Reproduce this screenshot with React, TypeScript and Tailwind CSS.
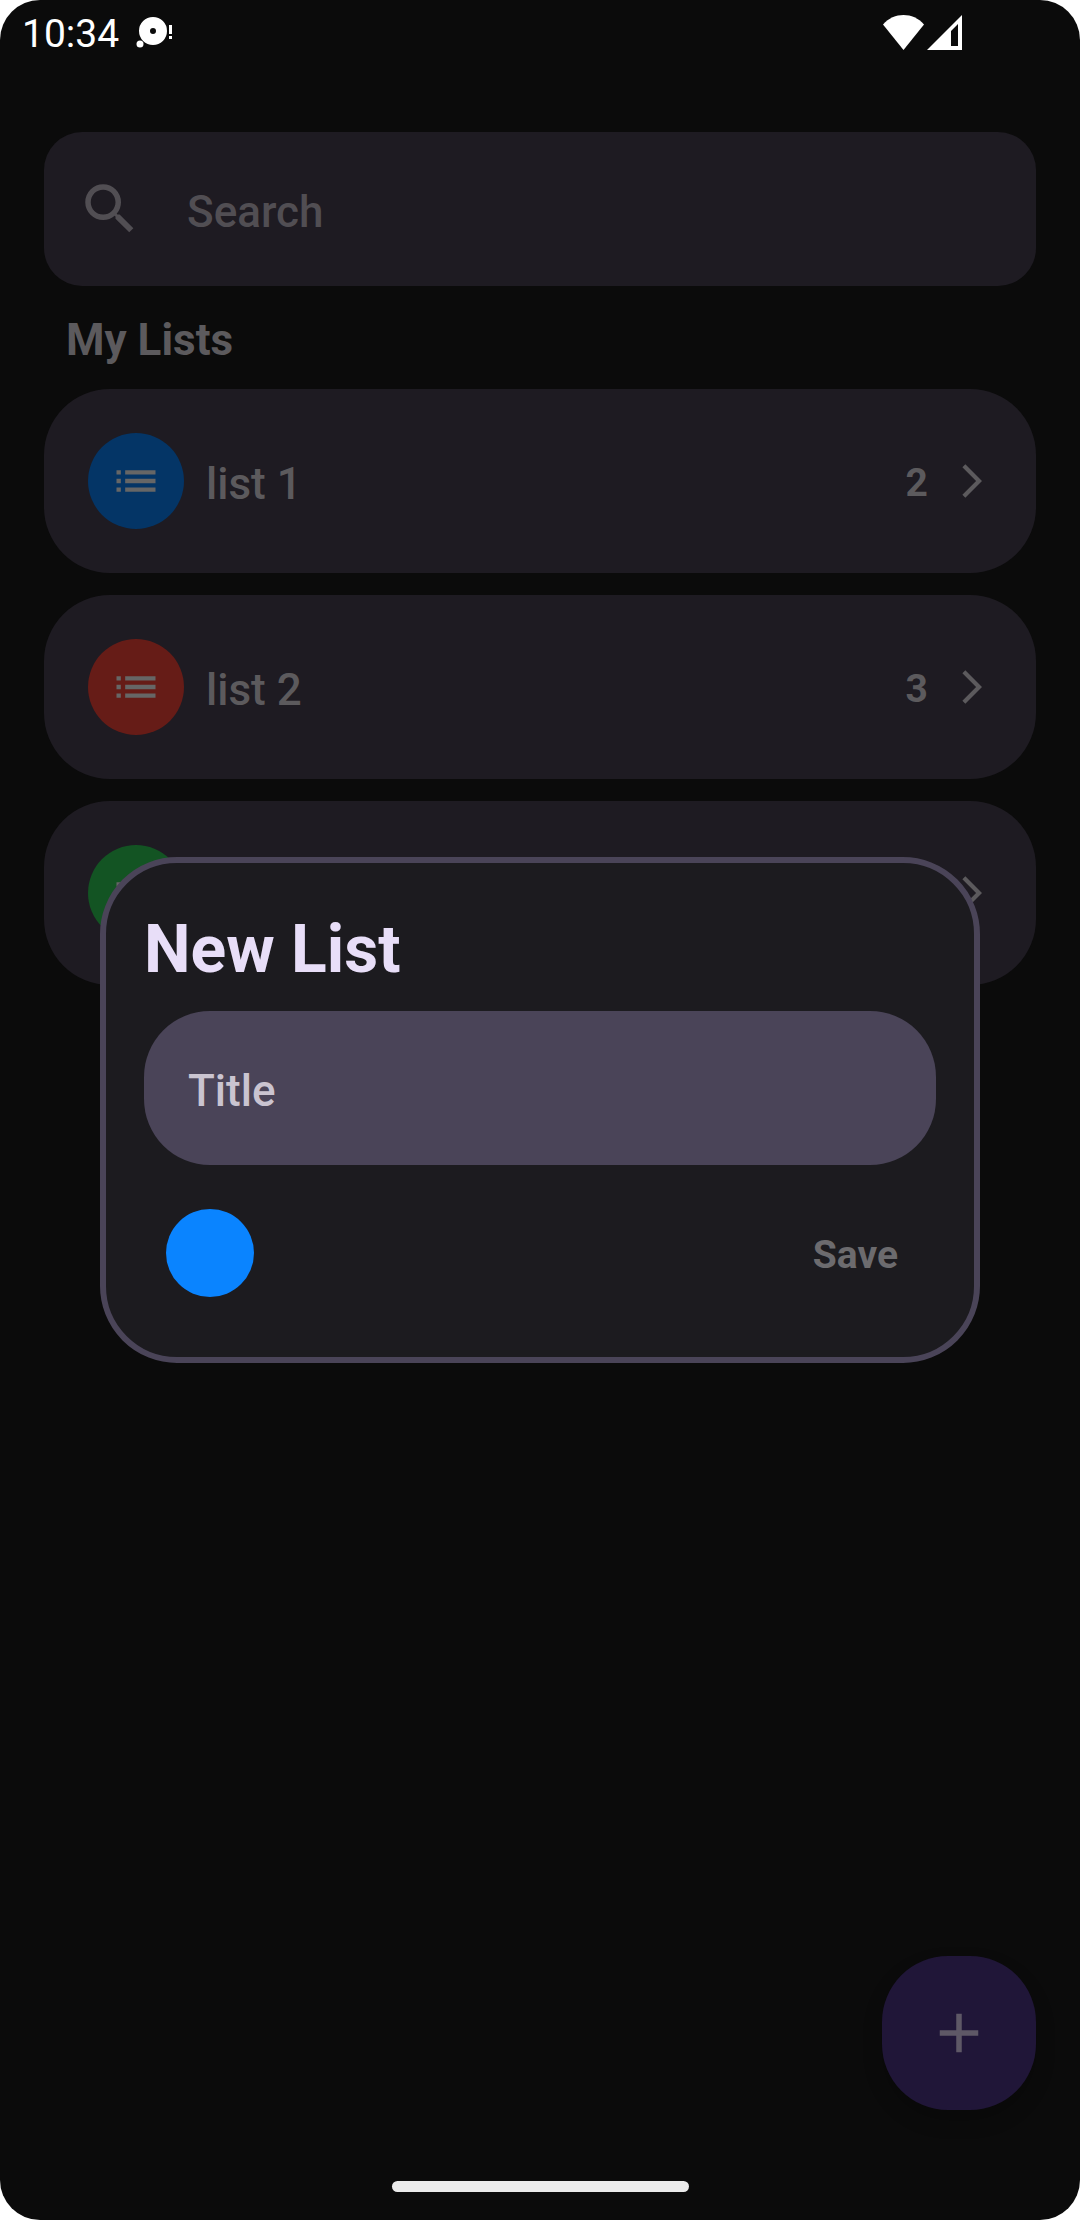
import React, { useState } from "react";

type TodoList = { name: string; count: number | null; color: string };

const lists: TodoList[] = [
  { name: "list 1", count: 2, color: "bg-[#043566]" },
  { name: "list 2", count: 3, color: "bg-[#661c17]" },
  { name: "", count: null, color: "bg-[#135423]" },
];

function StatusBar() {
  return (
    <header className="flex h-16 items-center justify-between pl-[22px] pr-[118px] text-white">
      <div className="flex items-center gap-4">
        <time className="pt-1 text-[39px] leading-[48px]">10:34</time>
        <svg className="h-8 w-10" viewBox="0 0 40 32" fill="currentColor" aria-hidden="true">
          <path
            fillRule="evenodd"
            d="M18 1a14 14 0 1 0 0 28 14 14 0 0 0 0-28zm0 11a3 3 0 1 1 0 6 3 3 0 0 1 0-6z"
          />
          <circle cx="5" cy="28" r="3.5" />
          <path d="M34 9h3v9h-3zM34 20h3v3h-3z" />
        </svg>
      </div>
      <div className="flex items-center gap-[3px]">
        <svg className="h-[35px] w-[41px]" viewBox="0 0 41 35" fill="currentColor" aria-hidden="true">
          <path d="M0 9.500C5.500 3 13 0 20.500 0S35.500 3 41 9.500L20.500 35z" />
        </svg>
        <svg className="h-[35px] w-[35px]" viewBox="0 0 35 35" fill="currentColor" aria-hidden="true">
          <path fillRule="evenodd" d="M35 0v35H0zM31 9l-7 7v15h7z" />
        </svg>
      </div>
    </header>
  );
}

function SearchField() {
  return (
    <label className="flex h-[154px] items-center gap-11 rounded-[38px] bg-[#1e1b22] px-[33px]">
      <svg className="size-[66px] shrink-0 text-[#514e53]" viewBox="0 0 24 24" fill="currentColor" aria-hidden="true">
        <path d="M15.5 14h-.79l-.28-.27A6.471 6.471 0 0 0 16 9.500 6.500 6.500 0 1 0 9.500 16c1.610 0 3.090-.59 4.230-1.570l.27.28v.79l5 4.990L20.490 19l-4.990-5zm-6 0C7.010 14 5 11.990 5 9.500S7.010 5 9.500 5 14 7.010 14 9.500 11.990 14 9.500 14z" />
      </svg>
      <input
        type="search"
        aria-label="Search"
        placeholder="Search"
        className="min-w-0 flex-1 bg-transparent pt-1.5 text-[44px] font-medium leading-[66px] text-[#5c5a5c] outline-none placeholder:text-[#514e53]"
      />
    </label>
  );
}

function ListCard({ list }: { list: TodoList }) {
  return (
    <li>
      <button
        type="button"
        aria-label={list.name || "Untitled list"}
        className="flex w-full items-center rounded-[66px] bg-[#1e1b22] p-11 text-left text-[#5c5a5d]"
      >
        <span className={`flex size-24 shrink-0 items-center justify-center rounded-full text-[#666666] ${list.color}`}>
          <svg className="size-[52px]" viewBox="0 0 24 24" fill="currentColor" aria-hidden="true">
            <path d="M3 13h2v-2H3v2zm0 4h2v-2H3v2zm0-8h2V7H3v2zm4 4h14v-2H7v2zm0 4h14v-2H7v2zM7 7v2h14V7H7z" />
          </svg>
        </span>
        <span className="flex-1 pl-[22px] pt-1.5 text-[44px] font-medium leading-[66px]">{list.name}</span>
        <span className="pr-6 pt-1 text-[39px] font-bold leading-[48px]">{list.count}</span>
        <svg className="size-10 shrink-0" viewBox="0 0 24 24" fill="currentColor" aria-hidden="true">
          <path d="M6.230 20.230 8 22l10-10L8 2 6.230 3.770 14.460 12z" />
        </svg>
      </button>
    </li>
  );
}

function NewListDialog() {
  const [title, setTitle] = useState("");
  return (
    <div className="absolute inset-0 flex items-center justify-center px-[100px]">
      <form
        role="dialog"
        aria-modal="true"
        aria-labelledby="new-list-title"
        onSubmit={(e) => e.preventDefault()}
        className="w-full rounded-[77px] border-[6px] border-[#4a4458] bg-[#1c1b1f] px-[38px] pb-[38px] pt-[46px]"
      >
        <h2 id="new-list-title" className="pb-5 text-[66px] font-bold leading-[82px] text-[#e8def8]">
          New List
        </h2>
        <input
          type="text"
          aria-label="Title"
          placeholder="Title"
          value={title}
          onChange={(e) => setTitle(e.target.value)}
          className="block h-[154px] w-full rounded-[66px] bg-[#4a4458] px-11 pt-1.5 text-[44px] font-medium text-[#e6e1e5] outline-none placeholder:text-[#cac4d0]"
        />
        <div className="flex items-center justify-between px-[22px] pb-[22px] pt-11">
          <button type="button" aria-label="List colour" className="size-[88px] rounded-full bg-[#0a84ff]" />
          <button
            type="submit"
            disabled={title === ""}
            className="px-4 pt-1 text-[39px] font-bold leading-[48px] text-[#e8def8] disabled:text-[#6c6b6e]"
          >
            Save
          </button>
        </div>
      </form>
    </div>
  );
}

export default function App() {
  return (
    <div className="bg-white font-[Roboto,sans-serif]">
      <div className="relative flex min-h-screen flex-col overflow-hidden rounded-[40px] bg-[#0b0b0b]">
        <StatusBar />
        <main className="flex flex-1 flex-col px-11 pt-[68px]">
          <SearchField />
          <h1 className="px-[22px] pb-4 pt-[21px] text-[44px] font-bold leading-[66px] text-[#5c5a5d]">My Lists</h1>
          <ul className="flex flex-col gap-[22px]">
            {lists.map((list) => (
              <ListCard key={list.color} list={list} />
            ))}
          </ul>
          <button
            type="button"
            aria-label="Add list"
            className="mb-[71px] ml-auto mt-auto flex size-[154px] items-center justify-center rounded-[66px] bg-[#201638] text-[#5e5866] shadow-[0_10px_20px_rgba(0,0,0,0.2)]"
          >
            <svg className="size-[66px]" viewBox="0 0 24 24" fill="currentColor" aria-hidden="true">
              <path d="M19 13h-6v6h-2v-6H5v-2h6V5h2v6h6v2z" />
            </svg>
          </button>
        </main>
        <NewListDialog />
        <div className="mx-auto mb-7 h-[11px] w-[297px] rounded-full bg-[#ebebeb]" />
      </div>
    </div>
  );
}
